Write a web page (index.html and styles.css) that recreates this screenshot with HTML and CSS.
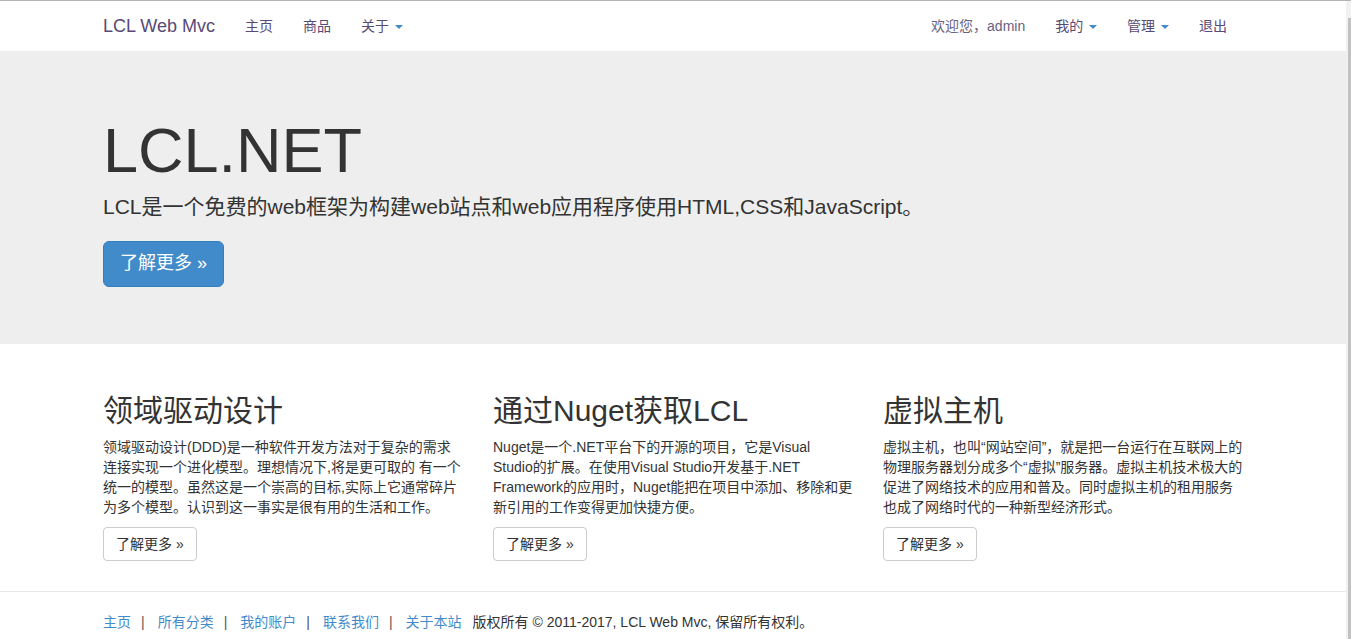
FILE: index.html
```html
<!DOCTYPE html>
<html lang="zh-CN">
<head>
<meta charset="utf-8">
<title>LCL Web Mvc</title>
<link rel="stylesheet" href="styles.css">
</head>
<body>
<div class="page">
  <div class="main">
    <nav class="navbar">
      <div class="container nav-inner">
        <a class="brand" href="#">LCL Web Mvc</a>
        <ul class="nav">
          <li><a href="#">主页</a></li>
          <li><a href="#">商品</a></li>
          <li><a href="#">关于 <span class="caret"></span></a></li>
        </ul>
        <ul class="nav nav-right">
          <li class="navbar-text">欢迎您，admin</li>
          <li><a href="#">我的 <span class="caret"></span></a></li>
          <li><a href="#">管理 <span class="caret"></span></a></li>
          <li><a href="#">退出</a></li>
        </ul>
      </div>
    </nav>

    <div class="jumbotron">
      <div class="container">
        <h1>LCL.NET</h1>
        <p class="lead">LCL是一个免费的web框架为构建web站点和web应用程序使用HTML,CSS和JavaScript。</p>
        <p class="jumbo-action"><a class="btn btn-primary btn-lg" href="#">了解更多 &raquo;</a></p>
      </div>
    </div>

    <div class="container">
      <div class="row">
        <div class="col">
          <h2>领域驱动设计</h2>
          <p>领域驱动设计(DDD)是一种软件开发方法对于复杂的需求连接实现一个进化模型。理想情况下,将是更可取的 有一个统一的模型。虽然这是一个崇高的目标,实际上它通常碎片为多个模型。认识到这一事实是很有用的生活和工作。</p>
          <p class="action"><a class="btn btn-default" href="#">了解更多 &raquo;</a></p>
        </div>
        <div class="col">
          <h2>通过Nuget获取LCL</h2>
          <p>Nuget是一个.NET平台下的开源的项目，它是Visual Studio的扩展。在使用Visual Studio开发基于.NET Framework的应用时，Nuget能把在项目中添加、移除和更新引用的工作变得更加快捷方便。</p>
          <p class="action"><a class="btn btn-default" href="#">了解更多 &raquo;</a></p>
        </div>
        <div class="col">
          <h2>虚拟主机</h2>
          <p>虚拟主机，也叫“网站空间”，就是把一台运行在互联网上的物理服务器划分成多个“虚拟”服务器。虚拟主机技术极大的促进了网络技术的应用和普及。同时虚拟主机的租用服务也成了网络时代的一种新型经济形式。</p>
          <p class="action"><a class="btn btn-default" href="#">了解更多 &raquo;</a></p>
        </div>
      </div>
    </div>

    <hr class="divider">

    <footer class="container footer">
      <p class="footer-links"><a href="#">主页</a><span class="sep">|</span><a href="#">所有分类</a><span class="sep">|</span><a href="#">我的账户</a><span class="sep">|</span><a href="#">联系我们</a><span class="sep">|</span><a href="#">关于本站</a><span class="copy">版权所有 © 2011-2017, LCL Web Mvc, 保留所有权利。</span></p>
    </footer>
  </div>
  <div class="scrollbar"><div class="thumb"></div></div>
</div>
</body>
</html>
```

FILE: styles.css
```css
* {
  box-sizing: border-box;
}

html,
body {
  margin: 0;
  height: 100%;
  overflow: hidden;
}

body {
  font-family: "Liberation Sans", "Noto Sans CJK SC", sans-serif;
  font-size: 14px;
  line-height: 1.428571429;
  color: #333;
  background: #fff;
}

a {
  text-decoration: none;
}

.page {
  display: flex;
  height: 639px;
  border-top: 1px solid #b4b4b4;
}

.main {
  flex: 1;
  min-width: 0;
}

.scrollbar {
  width: 5px;
  background: #f1f1f1;
  display: flex;
  flex-direction: column;
  padding-top: 17px;
}

.thumb {
  flex: 1;
  margin-left: 2px;
  background: #c1c1c1;
}

.container {
  width: 1170px;
  margin: 0 auto;
  padding: 0 15px;
}

/* navbar */
.navbar {
  height: 50px;
  background: #fff;
}

.nav-inner {
  display: flex;
}

.brand {
  display: block;
  margin-left: -15px;
  padding: 15px;
  font-size: 18px;
  line-height: 20px;
  color: #584a76;
}

.nav {
  display: flex;
  list-style: none;
  margin: 0;
  padding: 0;
}

.nav a {
  display: block;
  padding: 15px;
  line-height: 20px;
  color: #584a76;
}

.nav-right {
  margin-left: auto;
  margin-right: 1px;
}

.navbar-text {
  margin: 15px;
  line-height: 20px;
  color: #6a6180;
}

.caret {
  display: inline-block;
  width: 0;
  height: 0;
  margin-left: 2px;
  vertical-align: middle;
  border-top: 4px solid #428bca;
  border-left: 4px solid transparent;
  border-right: 4px solid transparent;
}

/* jumbotron */
.jumbotron {
  background: #eee;
  padding: 48px 0;
  margin-bottom: 30px;
}

.jumbotron h1 {
  font-size: 63px;
  line-height: 1;
  font-weight: 400;
  margin: 20px 0 10px;
  color: #333;
}

.lead {
  font-size: 21px;
  line-height: 1.4;
  font-weight: 400;
  margin: 0 0 20px;
}

.jumbo-action {
  font-size: 21px;
  line-height: 1.4;
  margin: 0 0 9px;
}

.btn {
  display: inline-block;
  border: 1px solid transparent;
  white-space: nowrap;
}

.btn-primary {
  background: #428bca;
  border-color: #357ebd;
  color: #fff;
}

.btn-lg {
  padding: 10px 16px;
  font-size: 18px;
  line-height: 1.33;
  border-radius: 6px;
}

.btn-default {
  padding: 6px 12px;
  font-size: 14px;
  line-height: 20px;
  border-color: #ccc;
  border-radius: 4px;
  color: #333;
  background: #fff;
}

/* columns */
.row {
  display: flex;
  margin: 0 -15px;
}

.col {
  width: 390px;
  padding: 0 15px;
}

.col h2 {
  font-size: 30px;
  line-height: 1.1;
  font-weight: 400;
  margin: 20px 0 10px;
  color: #333;
}

.col p {
  margin: 0 0 10px;
}

.divider {
  margin: 20px 0;
  border: 0;
  border-top: 1px solid #e8e8e8;
  height: 0;
}

/* footer */
.footer-links {
  display: flex;
  margin: 0 0 10px;
  line-height: 20px;
}

.footer-links a {
  color: #428bca;
  margin-right: 10px;
}

.footer-links .sep {
  color: #555;
  margin-right: 13px;
}

.footer-links .copy {
  margin-left: 1px;
  color: #333;
}
```
